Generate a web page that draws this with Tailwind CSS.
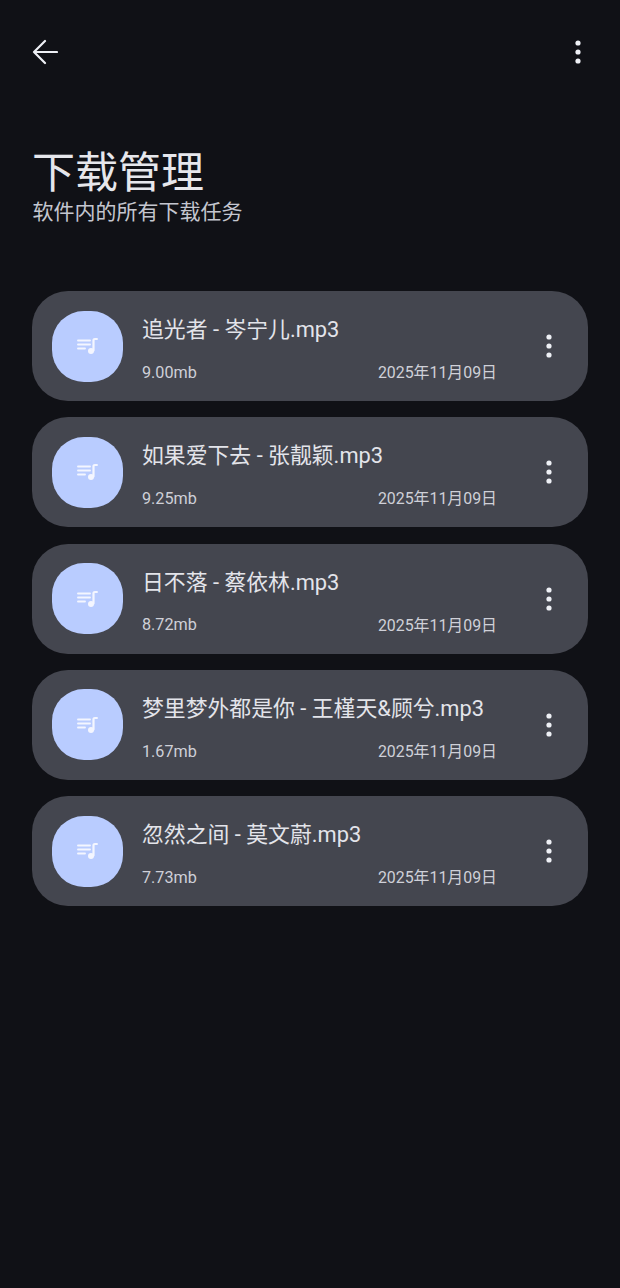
<!DOCTYPE html>
<html lang="zh-CN">
  <head>
    <meta charset="UTF-8" />
    <meta name="viewport" content="width=device-width, initial-scale=1.0" />
    <title>下载管理</title>
    <script src="https://cdn.jsdelivr.net/npm/@tailwindcss/browser@4"></script>
  </head>
  <body class="bg-[#101116] w-[620px] h-[1288px] overflow-hidden font-['Roboto','Noto_Sans_CJK_SC',sans-serif]">
    <!-- top bar -->
    <div class="flex items-center justify-between h-[30px] mt-[37px] pl-[32px] pr-[37px]">
      <svg class="w-[26px] h-[26px]" viewBox="0 0 26 26" fill="none" stroke="#eef0f5" stroke-width="2.2" stroke-linecap="round" stroke-linejoin="round">
        <path d="M25 13H2M13 2 2 13l11 11" />
      </svg>
      <svg class="w-[10px] h-[26px]" viewBox="0 0 10 26" fill="#eef0f5">
        <circle cx="5" cy="4" r="2.6" />
        <circle cx="5" cy="13" r="2.6" />
        <circle cx="5" cy="22" r="2.6" />
      </svg>
    </div>

    <h1 class="mt-[81px] ml-[32px] text-[43px] leading-[50px] font-normal text-[#e6e7ec]">下载管理</h1>
    <p class="ml-[32.5px] text-[21px] leading-[28px] text-[#c4c6cf]">软件内的所有下载任务</p>

    <div id="list" class="mt-[65px] mx-[32px] flex flex-col gap-[16.3px]">
      <div class="h-[110px] rounded-[36px] bg-[#44464f] flex items-center pl-[20px] pr-[35px]">
        <div class="w-[71px] h-[71px] rounded-[32px] bg-[#b9ccff] flex items-center justify-center shrink-0">
          <svg class="w-[22px] h-[18px]" viewBox="0 0 22 18" fill="none" stroke="#f4f6ff" stroke-width="1.9" stroke-linecap="round">
            <path d="M1 3.5h12M1 7.5h12M1 11.5h7" />
            <path d="M16.5 13.5V3.2c0-.8.5-1.2 1.4-1.2h2" stroke-width="2.2" />
            <circle cx="14" cy="14" r="3" fill="#f4f6ff" stroke="none" />
          </svg>
        </div>
        <div class="ml-[19px] w-[355px] shrink-0 pt-[8px]">
          <div class="text-[21.85px] leading-[30px] text-[#e3e4ea] mb-[16px] whitespace-nowrap">追光者 - 岑宁儿.mp3</div>
          <div class="flex justify-between items-center h-[24px] text-[#cfd0d8]"><span class="text-[16.2px]">9.00mb</span><span class="text-[15.9px]">2025年11月09日</span></div>
        </div>
        <svg class="ml-auto w-[8px] h-[26px]" viewBox="0 0 8 26" fill="#eef0f5"><circle cx="4" cy="4" r="2.6" /><circle cx="4" cy="13" r="2.6" /><circle cx="4" cy="22" r="2.6" /></svg>
      </div>

      <div class="h-[110px] rounded-[36px] bg-[#44464f] flex items-center pl-[20px] pr-[35px]">
        <div class="w-[71px] h-[71px] rounded-[32px] bg-[#b9ccff] flex items-center justify-center shrink-0">
          <svg class="w-[22px] h-[18px]" viewBox="0 0 22 18" fill="none" stroke="#f4f6ff" stroke-width="1.9" stroke-linecap="round">
            <path d="M1 3.5h12M1 7.5h12M1 11.5h7" />
            <path d="M16.5 13.5V3.2c0-.8.5-1.2 1.4-1.2h2" stroke-width="2.2" />
            <circle cx="14" cy="14" r="3" fill="#f4f6ff" stroke="none" />
          </svg>
        </div>
        <div class="ml-[19px] w-[355px] shrink-0 pt-[8px]">
          <div class="text-[21.85px] leading-[30px] text-[#e3e4ea] mb-[16px] whitespace-nowrap">如果爱下去 - 张靓颖.mp3</div>
          <div class="flex justify-between items-center h-[24px] text-[#cfd0d8]"><span class="text-[16.2px]">9.25mb</span><span class="text-[15.9px]">2025年11月09日</span></div>
        </div>
        <svg class="ml-auto w-[8px] h-[26px]" viewBox="0 0 8 26" fill="#eef0f5"><circle cx="4" cy="4" r="2.6" /><circle cx="4" cy="13" r="2.6" /><circle cx="4" cy="22" r="2.6" /></svg>
      </div>

      <div class="h-[110px] rounded-[36px] bg-[#44464f] flex items-center pl-[20px] pr-[35px]">
        <div class="w-[71px] h-[71px] rounded-[32px] bg-[#b9ccff] flex items-center justify-center shrink-0">
          <svg class="w-[22px] h-[18px]" viewBox="0 0 22 18" fill="none" stroke="#f4f6ff" stroke-width="1.9" stroke-linecap="round">
            <path d="M1 3.5h12M1 7.5h12M1 11.5h7" />
            <path d="M16.5 13.5V3.2c0-.8.5-1.2 1.4-1.2h2" stroke-width="2.2" />
            <circle cx="14" cy="14" r="3" fill="#f4f6ff" stroke="none" />
          </svg>
        </div>
        <div class="ml-[19px] w-[355px] shrink-0 pt-[8px]">
          <div class="text-[21.85px] leading-[30px] text-[#e3e4ea] mb-[16px] whitespace-nowrap">日不落 - 蔡依林.mp3</div>
          <div class="flex justify-between items-center h-[24px] text-[#cfd0d8]"><span class="text-[16.2px]">8.72mb</span><span class="text-[15.9px]">2025年11月09日</span></div>
        </div>
        <svg class="ml-auto w-[8px] h-[26px]" viewBox="0 0 8 26" fill="#eef0f5"><circle cx="4" cy="4" r="2.6" /><circle cx="4" cy="13" r="2.6" /><circle cx="4" cy="22" r="2.6" /></svg>
      </div>

      <div class="h-[110px] rounded-[36px] bg-[#44464f] flex items-center pl-[20px] pr-[35px]">
        <div class="w-[71px] h-[71px] rounded-[32px] bg-[#b9ccff] flex items-center justify-center shrink-0">
          <svg class="w-[22px] h-[18px]" viewBox="0 0 22 18" fill="none" stroke="#f4f6ff" stroke-width="1.9" stroke-linecap="round">
            <path d="M1 3.5h12M1 7.5h12M1 11.5h7" />
            <path d="M16.5 13.5V3.2c0-.8.5-1.2 1.4-1.2h2" stroke-width="2.2" />
            <circle cx="14" cy="14" r="3" fill="#f4f6ff" stroke="none" />
          </svg>
        </div>
        <div class="ml-[19px] w-[355px] shrink-0 pt-[8px]">
          <div class="text-[21.85px] leading-[30px] text-[#e3e4ea] mb-[16px] whitespace-nowrap">梦里梦外都是你 - 王槿天&amp;顾兮.mp3</div>
          <div class="flex justify-between items-center h-[24px] text-[#cfd0d8]"><span class="text-[16.2px]">1.67mb</span><span class="text-[15.9px]">2025年11月09日</span></div>
        </div>
        <svg class="ml-auto w-[8px] h-[26px]" viewBox="0 0 8 26" fill="#eef0f5"><circle cx="4" cy="4" r="2.6" /><circle cx="4" cy="13" r="2.6" /><circle cx="4" cy="22" r="2.6" /></svg>
      </div>

      <div class="h-[110px] rounded-[36px] bg-[#44464f] flex items-center pl-[20px] pr-[35px]">
        <div class="w-[71px] h-[71px] rounded-[32px] bg-[#b9ccff] flex items-center justify-center shrink-0">
          <svg class="w-[22px] h-[18px]" viewBox="0 0 22 18" fill="none" stroke="#f4f6ff" stroke-width="1.9" stroke-linecap="round">
            <path d="M1 3.5h12M1 7.5h12M1 11.5h7" />
            <path d="M16.5 13.5V3.2c0-.8.5-1.2 1.4-1.2h2" stroke-width="2.2" />
            <circle cx="14" cy="14" r="3" fill="#f4f6ff" stroke="none" />
          </svg>
        </div>
        <div class="ml-[19px] w-[355px] shrink-0 pt-[8px]">
          <div class="text-[21.85px] leading-[30px] text-[#e3e4ea] mb-[16px] whitespace-nowrap">忽然之间 - 莫文蔚.mp3</div>
          <div class="flex justify-between items-center h-[24px] text-[#cfd0d8]"><span class="text-[16.2px]">7.73mb</span><span class="text-[15.9px]">2025年11月09日</span></div>
        </div>
        <svg class="ml-auto w-[8px] h-[26px]" viewBox="0 0 8 26" fill="#eef0f5"><circle cx="4" cy="4" r="2.6" /><circle cx="4" cy="13" r="2.6" /><circle cx="4" cy="22" r="2.6" /></svg>
      </div>
    </div>
  </body>
</html>
